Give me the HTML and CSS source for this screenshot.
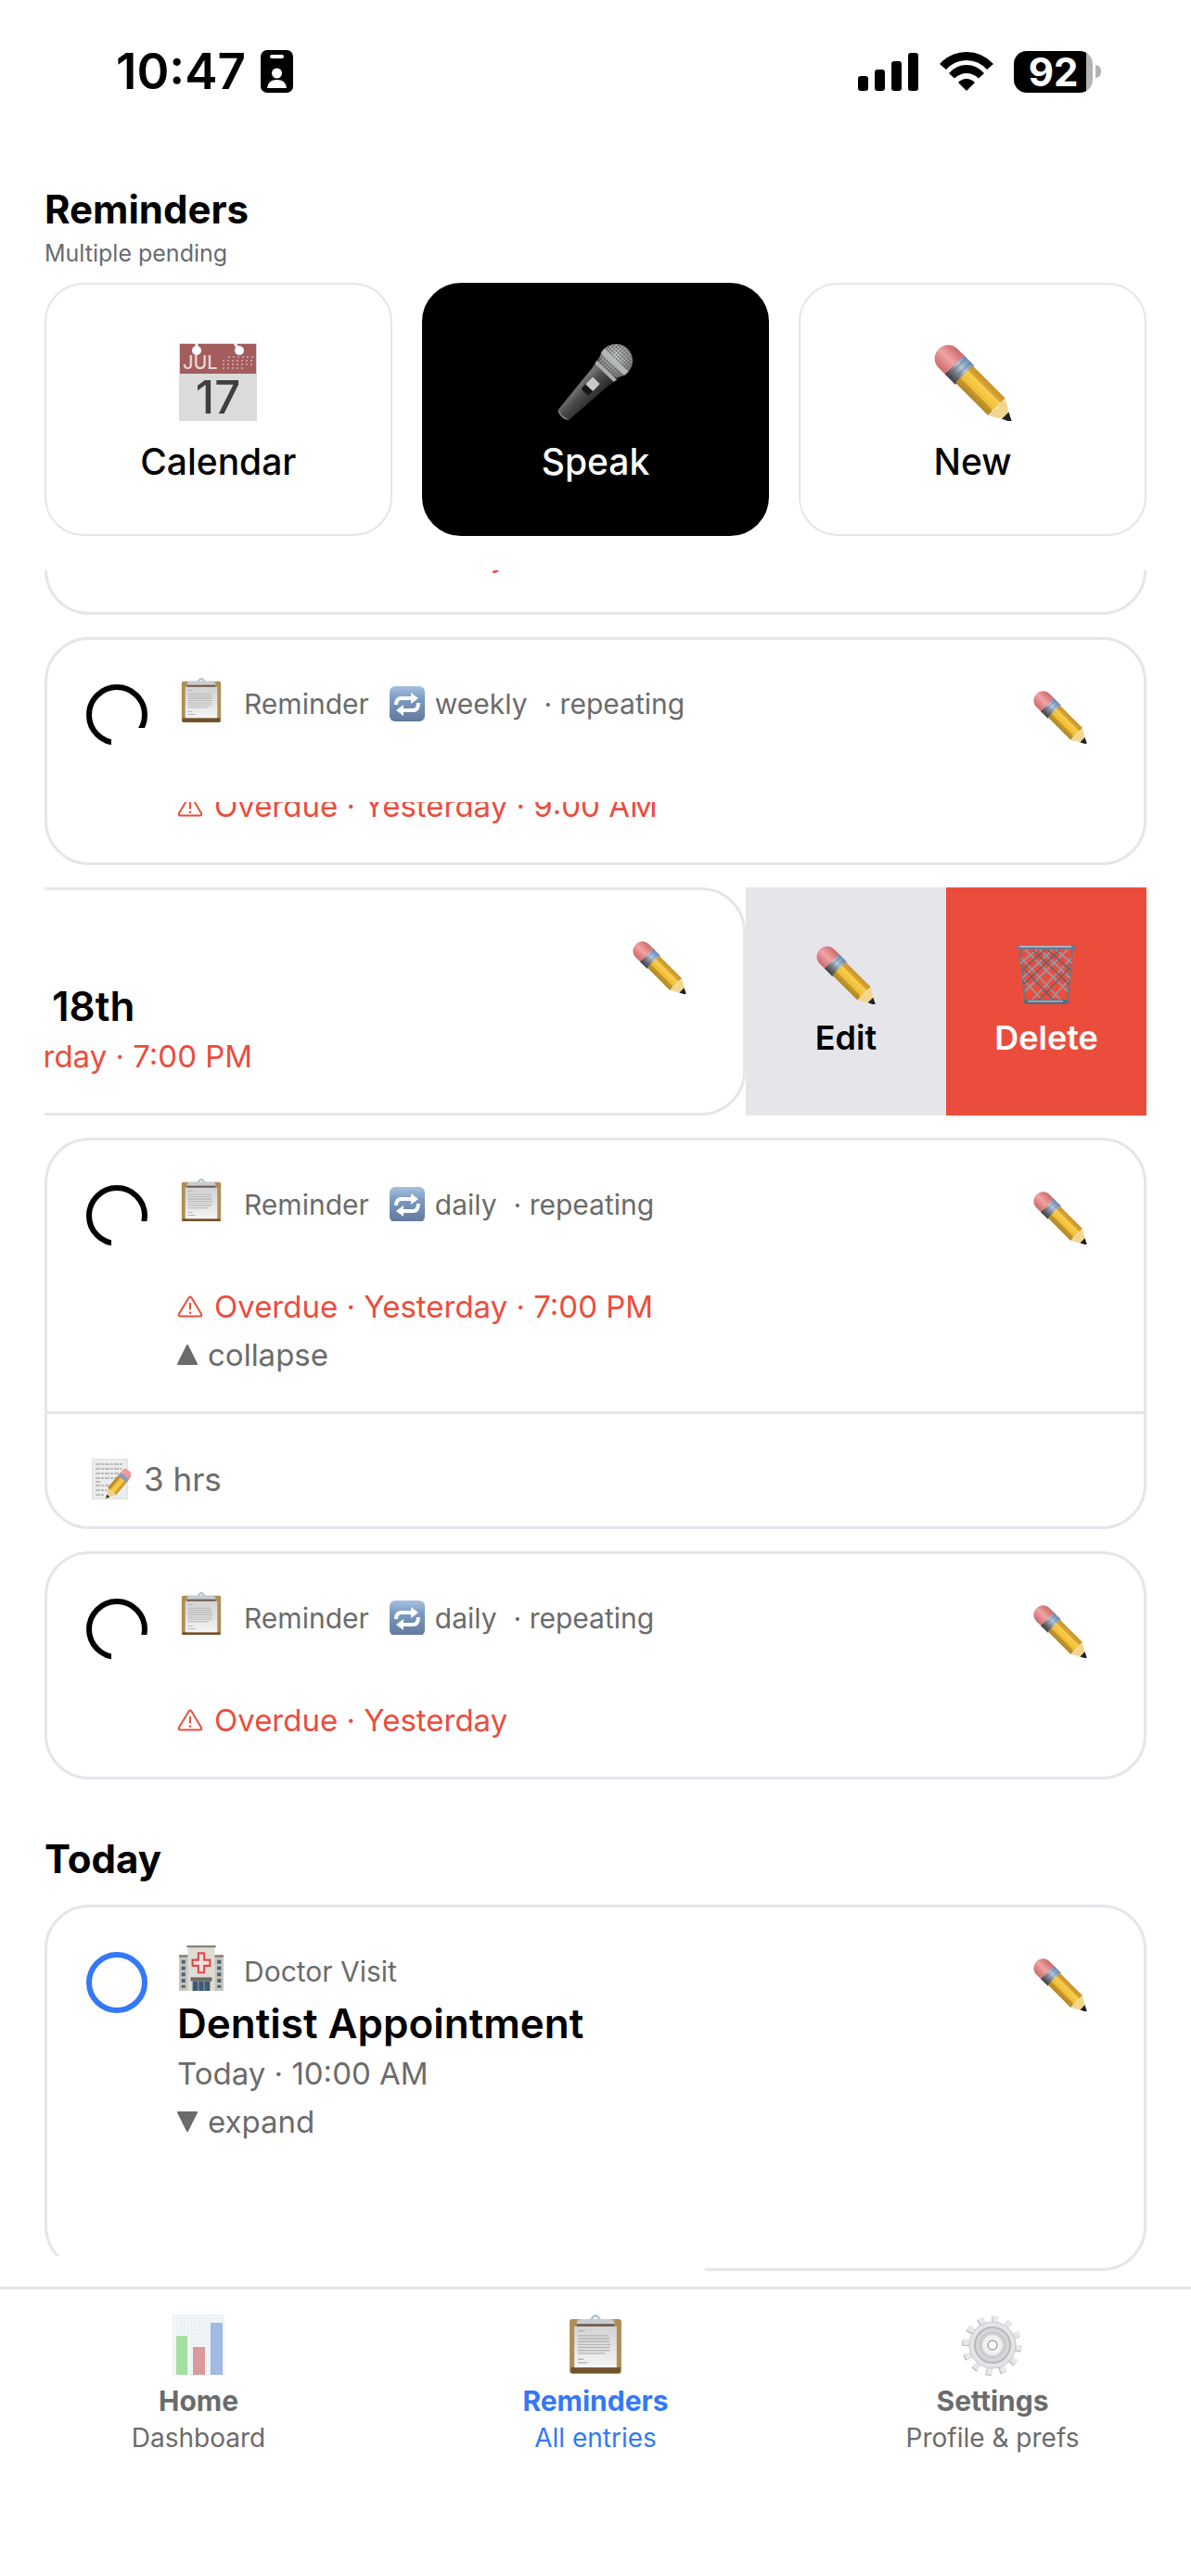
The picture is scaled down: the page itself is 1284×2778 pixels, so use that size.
FILE: index.html
```html
<!DOCTYPE html>
<html lang="en">
<head>
    <meta charset="utf-8">
    <meta name="viewport" content="width=device-width, initial-scale=1">
    <title>Reminders</title>
    <link rel="stylesheet" href="styles.css">
</head>
<body>
    <svg class="sprite" aria-hidden="true">
        <defs>
            <linearGradient id="g-yellow" x1="0" y1="0" x2="0" y2="1">
                <stop offset="0" stop-color="#c9922a"/>
                <stop offset="0.25" stop-color="#d8a636"/>
                <stop offset="0.3" stop-color="#f8cf4e"/>
                <stop offset="0.68" stop-color="#f0bd35"/>
                <stop offset="0.74" stop-color="#c4962c"/>
                <stop offset="1" stop-color="#b08828"/>
            </linearGradient>
            <linearGradient id="g-metal" x1="0" y1="0" x2="0" y2="1">
                <stop offset="0" stop-color="#6b8ab5"/>
                <stop offset="0.4" stop-color="#b4c6dc"/>
                <stop offset="0.7" stop-color="#77787b"/>
                <stop offset="1" stop-color="#37383a"/>
            </linearGradient>
            <linearGradient id="g-pink" x1="0" y1="0" x2="0" y2="1">
                <stop offset="0" stop-color="#c76a6c"/>
                <stop offset="0.5" stop-color="#f3a3a4"/>
                <stop offset="1" stop-color="#c9696c"/>
            </linearGradient>
            <linearGradient id="g-handle" x1="0" y1="0" x2="0" y2="1">
                <stop offset="0" stop-color="#242424"/>
                <stop offset="0.55" stop-color="#4c4c4c"/>
                <stop offset="0.85" stop-color="#777"/>
                <stop offset="1" stop-color="#333"/>
            </linearGradient>
            <radialGradient id="g-head" cx="0.4" cy="0.6" r="0.7">
                <stop offset="0" stop-color="#d8dad8"/>
                <stop offset="1" stop-color="#6f716f"/>
            </radialGradient>
            <linearGradient id="g-paper" x1="0" y1="0" x2="0" y2="1">
                <stop offset="0" stop-color="#d2d2d2"/>
                <stop offset="1" stop-color="#f4f4f4"/>
            </linearGradient>
            <linearGradient id="g-blue" x1="0" y1="0" x2="0" y2="1">
                <stop offset="0" stop-color="#a7c1df"/>
                <stop offset="0.35" stop-color="#7c9bc3"/>
                <stop offset="1" stop-color="#61799c"/>
            </linearGradient>
            <pattern id="p-mesh" width="3" height="3" patternUnits="userSpaceOnUse">
                <circle cx="1" cy="1" r="0.9" fill="#454745"/>
            </pattern>
            <pattern id="p-grid" width="4" height="4" patternUnits="userSpaceOnUse">
                <path d="M0 0H4M0 0V4" stroke="#e4eaef" stroke-width="1"/>
            </pattern>
        </defs>

        <symbol id="pencil" viewBox="0 0 64 64">
            <g transform="translate(9 10) rotate(45)">
                <path d="M4 -11 H14 V11 H4 C-11 11 -11 -11 4 -11Z" fill="url(#g-pink)"/>
                <rect x="11" y="-11" width="12" height="22" fill="url(#g-metal)"/>
                <path d="M14 -11V11M19 -11V11" stroke="#5a6a80" stroke-width="0.8" opacity="0.6"/>
                <path d="M22 -10 L60 -10 L60 10 L22 10Z" fill="url(#g-yellow)"/>
                <path d="M60 -10 L77 0 L60 10 Q62 7 58 4 Q64 0 58 -3 Q62 -7 60 -10Z" fill="#f2d590"/>
                <path d="M70 -4 L78 0 L70 4Z" fill="#1c2028"/>
            </g>
        </symbol>

        <symbol id="calendar" viewBox="0 0 84 84">
            <rect width="84" height="84" fill="#dcdbdb"/>
            <rect x="1" y="1" width="82" height="32" fill="#a35d5d"/>
            <circle cx="19" cy="8" r="5" fill="#fff"/>
            <circle cx="65" cy="8" r="5" fill="#fff"/>
            <path d="M19 0V8M60 0L65 8" stroke="#fff" stroke-width="3"/>
            <text x="4" y="28" class="cal-month">JUL</text>
            <path d="M47 19H82M47 23H82M47 27H70" stroke="#c99a9a" stroke-width="2" stroke-dasharray="2 3"/>
            <path d="M53 15H82" stroke="#c99a9a" stroke-width="2" stroke-dasharray="2 3"/>
            <text x="42" y="76" text-anchor="middle" class="cal-day">17</text>
        </symbol>

        <symbol id="mic" viewBox="0 0 84 84">
            <g transform="translate(64 19) rotate(134)">
                <path d="M10 -16 L24 -13 L82 -8 Q86 0 82 8 L24 13 L10 16Z" fill="url(#g-handle)"/>
                <circle r="18" fill="url(#g-head)"/>
                <circle r="18" fill="url(#p-mesh)"/>
                <path d="M-1 -18 L5 -17.500 L5 17.500 L-1 18Z" fill="#b3b7ba"/>
                <path d="M14 -15 L18 -14 L18 14 L14 15Z" fill="#a9acb0"/>
                <rect x="30" y="-5" width="18" height="11" rx="2" fill="#151515"/>
                <rect x="30" y="-5" width="11" height="11" rx="1" fill="#c9c9cb"/>
                <path d="M82 -6 Q85 0 82 6" stroke="#888" stroke-width="1.500" fill="none"/>
            </g>
        </symbol>

        <symbol id="clipboard" viewBox="-1 0 46 52">
            <rect y="4" width="44" height="46" rx="2" fill="#b08d55"/>
            <path d="M1 45H43V48Q43 50 41 50H3Q1 50 1 48Z" fill="#71522b"/>
            <rect x="4" y="10" width="36" height="35" fill="url(#g-paper)"/>
            <path d="M7 14H13M7 18H33M7 20.500H34M7 23H34M7 25.500H35M7 28H34M7 30.500H34M7 33H30M7 38H12M7 41H15" stroke="#b4b4b4" stroke-width="1.100"/>
            <path d="M18 5 Q20 1 22 1 Q24 1 26 5" fill="none" stroke="#b5c0c8" stroke-width="2"/>
            <path d="M6 9 V7 Q6 4 10 4H34Q38 4 38 7V9Z" fill="#c9ccd0"/>
            <rect x="6" y="8" width="32" height="2" fill="#695a55"/>
        </symbol>

        <symbol id="repeat" viewBox="0 0 38 38">
            <rect width="38" height="38" rx="6" fill="url(#g-blue)"/>
            <path d="M7 20 Q7 13 13 13H25M31 18 Q31 26 25 26H13" fill="none" stroke="#fff" stroke-width="4"/>
            <path d="M23 7L31 13L23 19ZM15 20L7 26L15 32Z" fill="#fff"/>
        </symbol>

        <symbol id="hospital" viewBox="0 0 46 48">
            <path d="M0 10H10V47H0ZM36 10H46V47H36Z" fill="#c9c5bb"/>
            <rect x="9" y="2" width="28" height="45" fill="#dfdcd5"/>
            <path d="M8 1H38M0 11H9M37 11H46" stroke="#85817b" stroke-width="2.500"/>
            <path d="M4.500 15V44M41.500 15V44" stroke="#4a6680" stroke-width="4" stroke-dasharray="4 2.500"/>
            <path d="M20 8H26V15H32V21H26V28H20V21H14V15H20Z" fill="#f6dedb" stroke="#d94c4c" stroke-width="2"/>
            <rect x="12" y="33" width="22" height="4" fill="#6e6963"/>
            <path d="M14 37H32V47H14Z" fill="#3f5a74"/>
            <path d="M20 37V47M26 37V47" stroke="#93a6b4" stroke-width="1"/>
        </symbol>

        <symbol id="trash" viewBox="0 0 64 64">
            <path d="M4 5 L9 60 H55 L60 5" fill="none" stroke="#6b7480" stroke-width="2"/>
            <path d="M5 14L48 60M8 38L28 60M9 5L55 50M25 5L58 36M42 5L60 20M59 14L16 60M56 38L36 60M55 5L9 50M39 5L6 36M22 5L4 20" stroke="#8f9aa8" stroke-width="1.800"/>
            <path d="M8 26L40 60M17 5L57 43M33 5L59 28M56 26L24 60M47 5L7 43M31 5L5 28" stroke="#5d6570" stroke-width="1.500"/>
            <rect y="0" width="64" height="5" rx="2.500" fill="#6b7b8b"/>
            <rect x="3" y="1" width="56" height="1.500" fill="#b5c3ce"/>
            <rect x="8" y="59" width="48" height="5" rx="2" fill="#5b6a7b"/>
            <rect x="12" y="60" width="38" height="1.500" fill="#a5b5c4"/>
        </symbol>

        <symbol id="memo" viewBox="0 0 42 44">
            <rect width="38" height="44" fill="#ececec" stroke="#d2d2d2"/>
            <path d="M4 6H33M4 11H32M4 16H30M4 21H26M4 25H10M4 29H20M4 34H16M4 39H13" stroke="#8b8b8b" stroke-width="1.200" stroke-dasharray="5 1 3 1"/>
            <g transform="translate(37 17) rotate(130)">
                <rect x="-5" y="-6" width="9" height="12" rx="4" fill="#f0999c"/>
                <rect x="2" y="-6" width="5" height="12" fill="#8b9db2"/>
                <rect x="7" y="-6" width="17" height="12" fill="url(#g-yellow)"/>
                <path d="M24 -6L33 0L24 6Z" fill="#edd291"/>
                <path d="M30 -2L34 0L30 2Z" fill="#222"/>
            </g>
        </symbol>

        <symbol id="chart" viewBox="0 0 56 66">
            <rect width="56" height="66" fill="#f3f7fa"/>
            <rect width="56" height="66" fill="url(#p-grid)"/>
            <rect x="4" y="23" width="12" height="42" fill="#a5e0a1"/>
            <rect x="22" y="35" width="13" height="30" fill="#d89a9a"/>
            <rect x="41" y="9" width="13" height="56" fill="#a0bae2"/>
        </symbol>

        <symbol id="gear" viewBox="0 0 66 66">
            <circle cx="32" cy="34" r="28" fill="none" stroke="#b9b9bc" stroke-width="8" stroke-dasharray="6 8.660"/>
            <circle cx="33" cy="33" r="28" fill="none" stroke="#e6e8eb" stroke-width="8" stroke-dasharray="6 8.660"/>
            <circle cx="33" cy="33" r="25" fill="#e3e4e7" stroke="#c6c6ca"/>
            <circle cx="33" cy="33" r="19" fill="#d6d6d9" stroke="#b9b9bd" stroke-width="2"/>
            <circle cx="33" cy="33" r="14" fill="#d0d0d4" stroke="#c2c2c6"/>
            <circle cx="33" cy="33" r="9" fill="#fff" stroke="#efeff1" stroke-width="4"/>
            <circle cx="33" cy="33" r="5" fill="#fff" stroke="#b3b3b8" stroke-width="2"/>
        </symbol>

        <symbol id="warning" viewBox="0 0 28 24">
            <path d="M12.500 2.500 Q14 0.500 15.500 2.500 L26 20 Q27 22.500 24.500 22.500 H3.500 Q1 22.500 2 20Z" fill="none" stroke="currentColor" stroke-width="2"/>
            <path d="M14 8V15.500" stroke="currentColor" stroke-width="2"/>
            <circle cx="14" cy="18.800" r="1.300" fill="currentColor"/>
        </symbol>
    </svg>

    <div class="app">
        <div class="status-bar">
            <div class="status-left">
                <span class="clock">10:47</span>
                <svg class="badge-icon" viewBox="0 0 35 46">
                    <rect width="35" height="46" rx="7"/>
                    <rect x="10" y="5" width="15" height="4" rx="2" fill="#fff"/>
                    <circle cx="17.500" cy="25" r="5.500" fill="#fff"/>
                    <path d="M7 41 Q8 32 17.500 32 Q27 32 28 41Z" fill="#fff"/>
                </svg>
            </div>
            <div class="status-right">
                <svg class="signal" viewBox="0 0 66 41">
                    <rect y="25" width="11" height="16" rx="3"/>
                    <rect x="18" y="18" width="11" height="23" rx="3"/>
                    <rect x="36" y="9" width="11" height="32" rx="3"/>
                    <rect x="54" y="0" width="11" height="41" rx="3"/>
                </svg>
                <svg class="wifi" viewBox="0 0 58 42">
                    <path d="M0 13 Q12 0 29 0 Q46 0 58 13 L51 19 Q42 9 29 9 Q16 9 7 19Z"/>
                    <path d="M10 23 Q18 14 29 14 Q40 14 48 23 L42 28.500 Q36 23 29 23 Q22 23 16 28.500Z"/>
                    <path d="M20 33 Q24 29 29 29 Q34 29 38 33 L29 42Z"/>
                </svg>
                <div class="battery">
                    <span class="battery-level">92</span>
                    <span class="battery-cap"></span>
                </div>
            </div>
        </div>

        <header class="header">
            <h1>Reminders</h1>
            <p>Multiple pending</p>
        </header>

        <div class="actions">
            <button class="action"><svg><use href="#calendar"/></svg>Calendar</button>
            <button class="action action-dark"><svg><use href="#mic"/></svg>Speak</button>
            <button class="action"><svg><use href="#pencil"/></svg>New</button>
        </div>

        <main class="list">
            <article class="card card-scrolled">
                <div class="card-body">
                    <div class="info">
                        <div class="meta"></div>
                        <h3 class="title"></h3>
                        <p class="date overdue"><svg><use href="#warning"/></svg>Overdue · Yesterday</p>
                    </div>
                </div>
            </article>

            <article class="card">
                <div class="card-body">
                    <input type="checkbox" class="check" aria-label="Mark as done">
                    <div class="info">
                        <div class="meta">
                            <svg class="kind"><use href="#clipboard"/></svg>
                            <span class="kind-name">Reminder</span>
                            <svg class="repeat"><use href="#repeat"/></svg>
                            <span>weekly</span>
                            <span class="repeating">· repeating</span>
                        </div>
                        <h3 class="title"></h3>
                        <p class="date overdue"><svg><use href="#warning"/></svg>Overdue · Yesterday · 9:00 AM</p>
                    </div>
                    <button class="edit" aria-label="Edit"><svg><use href="#pencil"/></svg></button>
                </div>
                <div class="cover cover-title"></div>
            </article>

            <div class="swipe">
                <article class="card">
                    <div class="card-body">
                        <input type="checkbox" class="check" aria-label="Mark as done">
                        <div class="info">
                            <div class="meta">
                                <svg class="kind"><use href="#clipboard"/></svg>
                                <span class="kind-name">Reminder</span>
                            </div>
                            <h3 class="title title-indent">18th</h3>
                            <p class="date overdue"><svg><use href="#warning"/></svg>Overdue · Yesterday · 7:00 PM</p>
                        </div>
                        <button class="edit" aria-label="Edit"><svg><use href="#pencil"/></svg></button>
                    </div>
                </article>
                <button class="swipe-action"><svg><use href="#pencil"/></svg>Edit</button>
                <button class="swipe-action swipe-delete"><svg><use href="#trash"/></svg>Delete</button>
            </div>

            <article class="card">
                <div class="card-body">
                    <input type="checkbox" class="check" aria-label="Mark as done">
                    <div class="info">
                        <div class="meta">
                            <svg class="kind"><use href="#clipboard"/></svg>
                            <span class="kind-name">Reminder</span>
                            <svg class="repeat"><use href="#repeat"/></svg>
                            <span>daily</span>
                            <span class="repeating">· repeating</span>
                        </div>
                        <h3 class="title"></h3>
                        <p class="date overdue"><svg><use href="#warning"/></svg>Overdue · Yesterday · 7:00 PM</p>
                        <button class="toggle">
                            <svg viewBox="0 0 22 22"><path d="M11 1L21 21H1Z"/></svg>collapse
                        </button>
                    </div>
                    <button class="edit" aria-label="Edit"><svg><use href="#pencil"/></svg></button>
                </div>
                <p class="notes"><svg><use href="#memo"/></svg>3 hrs</p>
                <div class="cover cover-title cover-high"></div>
            </article>

            <article class="card">
                <div class="card-body">
                    <input type="checkbox" class="check" aria-label="Mark as done">
                    <div class="info">
                        <div class="meta">
                            <svg class="kind"><use href="#clipboard"/></svg>
                            <span class="kind-name">Reminder</span>
                            <svg class="repeat"><use href="#repeat"/></svg>
                            <span>daily</span>
                            <span class="repeating">· repeating</span>
                        </div>
                        <h3 class="title"></h3>
                        <p class="date overdue"><svg><use href="#warning"/></svg>Overdue · Yesterday</p>
                    </div>
                    <button class="edit" aria-label="Edit"><svg><use href="#pencil"/></svg></button>
                </div>
                <div class="cover cover-title cover-high"></div>
            </article>

            <h2>Today</h2>

            <article class="card card-last">
                <div class="card-body">
                    <input type="checkbox" class="check check-blue" aria-label="Mark as done">
                    <div class="info">
                        <div class="meta">
                            <svg class="kind"><use href="#hospital"/></svg>
                            <span class="kind-name">Doctor Visit</span>
                        </div>
                        <h3 class="title">Dentist Appointment</h3>
                        <p class="date">Today · 10:00 AM</p>
                        <button class="toggle">
                            <svg viewBox="0 0 22 22"><path d="M11 21L21 1H1Z"/></svg>expand
                        </button>
                    </div>
                    <button class="edit" aria-label="Edit"><svg><use href="#pencil"/></svg></button>
                </div>
                <div class="cover cover-bottom"></div>
            </article>
        </main>

        <nav class="tabs">
            <a href="#home"><svg><use href="#chart"/></svg><strong>Home</strong><span>Dashboard</span></a>
            <a href="#reminders" class="active"><svg><use href="#clipboard"/></svg><strong>Reminders</strong><span>All entries</span></a>
            <a href="#settings"><svg><use href="#gear"/></svg><strong>Settings</strong><span>Profile &amp; prefs</span></a>
        </nav>
    </div>
</body>
</html>
```
FILE: styles.css
```css
* {
    box-sizing: border-box;
}

body {
    margin: 0;
    background: #fff;
    color: #000;
    font-family: Inter, "Liberation Sans", sans-serif;
}

h1, h2, h3, p {
    margin: 0;
}

button {
    font-family: inherit;
    background: none;
    border: none;
    padding: 0;
    margin: 0;
    color: inherit;
    cursor: pointer;
}

svg {
    display: block;
    flex-shrink: 0;
}

.sprite {
    position: absolute;
    width: 0;
    height: 0;
}

.cal-month {
    font-size: 20px;
    fill: #e8d6d6;
}

.cal-day {
    font-size: 49px;
    font-weight: 500;
    fill: #3f3f3f;
}

.app {
    display: flex;
    flex-direction: column;
    min-height: 100vh;
}

/* status bar */
.status-bar {
    display: flex;
    justify-content: space-between;
    align-items: center;
    height: 154px;
    padding: 0 97px 0 125px;
}

.status-left, .status-right {
    display: flex;
    align-items: center;
}

.status-left {
    gap: 16px;
}

.status-right {
    gap: 22px;
}

.clock {
    font-size: 53px;
    font-weight: 600;
}

.badge-icon {
    width: 35px;
    height: 46px;
}

.signal {
    width: 66px;
    height: 41px;
}

.wifi {
    width: 58px;
    height: 42px;
}

.battery {
    display: flex;
    align-items: center;
    gap: 3px;
}

.battery-level {
    width: 85px;
    height: 45px;
    line-height: 45px;
    border-radius: 14px;
    background: linear-gradient(to right, #000 78px, #b3b3b3 78px);
    color: #fff;
    font-size: 42px;
    font-weight: 700;
    text-align: center;
}

.battery-cap {
    width: 6px;
    height: 14px;
    border-radius: 0 6px 6px 0;
    background: #b3b3b3;
}

/* header */
.header {
    padding: 48px 48px 14px;
}

h1 {
    font-size: 42px;
    font-weight: 700;
    line-height: 48px;
}

.header p {
    margin-top: 5px;
    font-size: 25px;
    line-height: 36px;
    color: #6b6b6b;
}

.actions {
    display: grid;
    grid-template-columns: repeat(3, 1fr);
    gap: 32px;
    padding: 0 48px;
    margin-bottom: 37px;
}

.action {
    display: flex;
    flex-direction: column;
    align-items: center;
    gap: 20px;
    padding: 63px 0 54px;
    border: 2px solid #e5e5ea;
    border-radius: 42px;
    font-size: 39px;
    font-weight: 500;
    line-height: 48px;
}

.action svg {
    width: 84px;
    height: 84px;
}

.action-dark {
    background: #000;
    border-color: #000;
    color: #fff;
}

/* list */
.list {
    flex: 1;
    overflow: hidden;
    padding: 0 48px 17px;
}

.card {
    position: relative;
    border: 3px solid #e5e5ea;
    border-radius: 48px;
    margin-bottom: 24px;
    background: #fff;
}

.card-scrolled {
    margin-top: -198px;
}

.card-scrolled .info {
    margin-left: 98px;
}

.card-last {
    padding-bottom: 97px;
    margin-bottom: 0;
}

.card-body {
    display: flex;
    align-items: flex-start;
    padding: 41px 61px 35px 42px;
}

.check {
    appearance: none;
    width: 66px;
    height: 66px;
    margin: 7px 32px 0 0;
    border: 6px solid #000;
    border-radius: 50%;
    flex-shrink: 0;
}

.check-blue {
    border-color: #3478f6;
}

.info {
    flex: 1;
}

.meta {
    display: flex;
    align-items: center;
    height: 56px;
    font-size: 30px;
    color: #6b6b6b;
}

.kind {
    width: 52px;
    height: 50px;
    margin-bottom: 6px;
}

.kind-name {
    margin-left: 20px;
}

.repeat {
    width: 38px;
    height: 38px;
    margin: 0 11px 0 22px;
}

.repeating {
    margin-left: 18px;
}

.title {
    height: 56px;
    font-size: 44px;
    font-weight: 600;
    line-height: 56px;
}

.title-indent {
    padding-left: 297px;
}

.date, .toggle {
    display: flex;
    align-items: center;
    font-size: 33px;
    line-height: 52px;
    color: #6b6b6b;
}

.overdue {
    color: #eb4d3d;
}

.date svg {
    width: 28px;
    height: 24px;
    margin-right: 12px;
}

.toggle svg {
    width: 22px;
    height: 22px;
    margin-right: 11px;
    fill: #6b6b6b;
    stroke: #6b6b6b;
    stroke-width: 2px;
    stroke-linejoin: round;
}

.edit {
    margin-top: 13px;
}

.edit svg {
    width: 58px;
    height: 58px;
}

.notes {
    display: flex;
    align-items: center;
    gap: 14px;
    padding: 48px 48px 29px;
    border-top: 3px solid #e5e5ea;
    font-size: 35px;
    line-height: 44px;
    color: #6b6b6b;
}

.notes svg {
    width: 42px;
    height: 44px;
}

.cover {
    position: absolute;
    background: #fff;
}

.cover-title {
    top: 95px;
    left: 69px;
    right: 200px;
    height: 80px;
}

.cover-high {
    top: 87px;
    height: 80px;
}

.cover-bottom {
    left: 9px;
    bottom: -3px;
    width: 700px;
    height: 16px;
}

/* swiped row */
.swipe {
    display: flex;
    justify-content: flex-end;
    overflow: hidden;
    margin-bottom: 24px;
}

.swipe .card {
    width: 100%;
    flex-shrink: 0;
    margin-bottom: 0;
}

.swipe-action {
    display: flex;
    flex-direction: column;
    align-items: center;
    justify-content: center;
    gap: 14px;
    width: 216px;
    flex-shrink: 0;
    background: #e5e5ea;
    font-size: 36px;
    font-weight: 600;
    line-height: 44px;
}

.swipe-action svg {
    width: 64px;
    height: 64px;
}

.swipe-delete {
    background: #eb4d3d;
    color: #fff;
}

h2 {
    padding-top: 34px;
    margin-bottom: 21px;
    font-size: 42px;
    font-weight: 700;
    line-height: 56px;
}

/* bottom tabs */
.tabs {
    display: grid;
    grid-template-columns: repeat(3, 1fr);
    padding: 27px 0 129px;
    border-top: 3px solid #e5e5ea;
}

.tabs a {
    display: flex;
    flex-direction: column;
    align-items: center;
    color: #6b6b6b;
    text-decoration: none;
    line-height: 40px;
}

.tabs svg {
    width: 66px;
    height: 66px;
    margin-bottom: 7px;
}

.tabs strong {
    font-size: 30px;
    font-weight: 700;
}

.tabs span {
    font-size: 28px;
}

.tabs .active {
    color: #3478f6;
}
```
